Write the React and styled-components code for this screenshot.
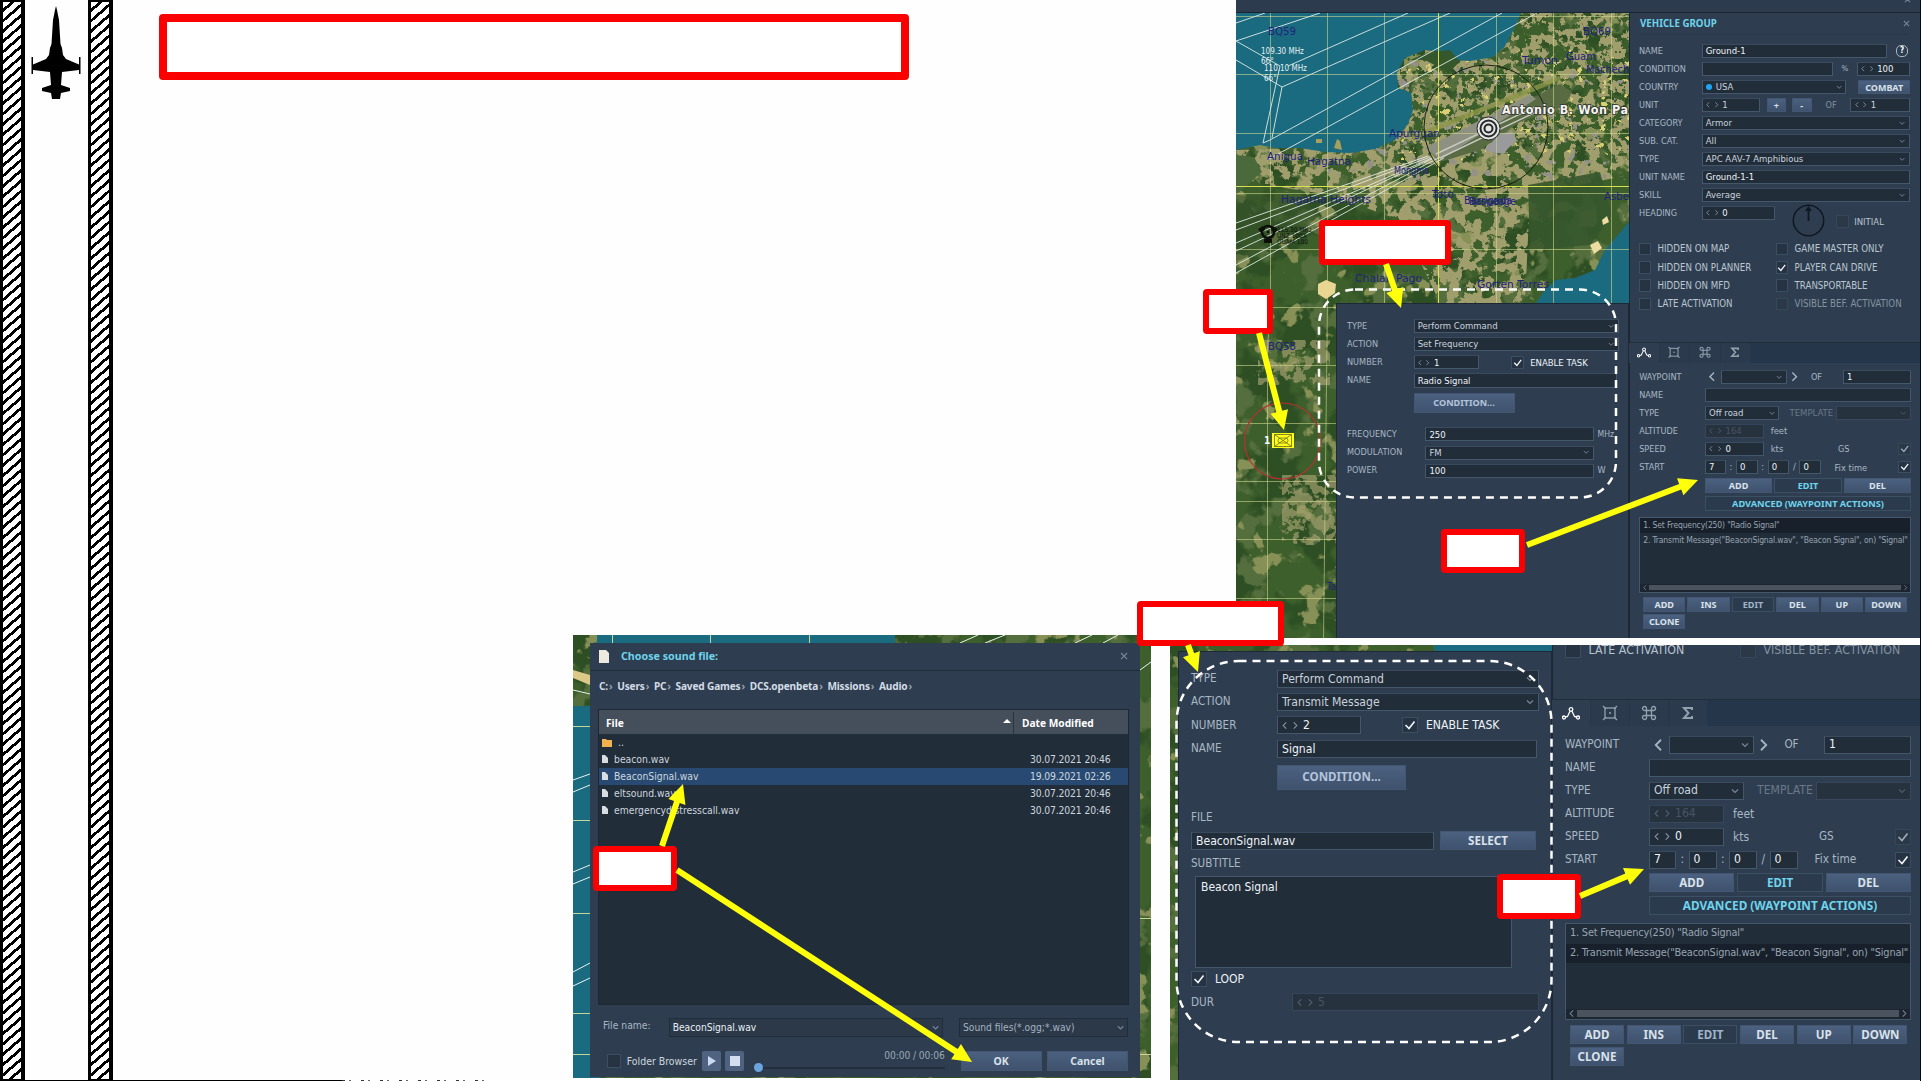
import React from "react";
import styled, { createGlobalStyle, css } from "styled-components";

const u = (n) => `calc(var(--u) * ${n})`;

const Global = createGlobalStyle`
  * { box-sizing: border-box; }
  body { margin: 0; background: #fefefe; overflow: hidden; }
`;

const C = {
  panel: "#2e3e50",
  field: "#222d3a",
  line: "#44576b",
  label: "#a9b6c4",
  text: "#c9d3dd",
  bright: "#eef3f8",
  cyan: "#6fd3ec",
  dim: "#6a7888",
};

/* ---------- page ---------- */
const Page = styled.main`
  position: relative;
  width: 1921px;
  height: 1081px;
  overflow: hidden;
  background: #fefefe;
  border-right: 1px solid #05080c;
  font-family: "DejaVu Sans Condensed", "DejaVu Sans", "Noto Sans", sans-serif;
  font-stretch: condensed;
  display: grid;
  grid-template-columns: 573px 578px 19px 66px 684px;
  grid-template-rows: 635px 3px 7px 435px 1px;
`;
const Rails = styled.aside`
  grid-column: 1;
  grid-row: 1 / 6;
  display: flex;
  align-items: flex-start;
  width: 573px;
`;
const Hatch = styled.div`
  width: 25px;
  height: 1081px;
  border: solid #000;
  border-width: 2px 4px 2px 3px;
  background: repeating-linear-gradient(139deg, #fff 0 5px, #000 5px 7.8px);
`;
const JetSlot = styled.div`
  width: 63px;
  height: 1081px;
  padding: 6px 0 0 4px;
  border-bottom: 1px solid #000;
`;
const Baseline = styled.div`
  align-self: flex-end;
  width: 229px;
  height: 1px;
  background: #000;
`;
const Ticks = styled(Baseline)`
  width: 142px;
  background: repeating-linear-gradient(90deg, #333 0 3px, transparent 3px 7px, #666 7px 9px, transparent 9px 19px);
`;

/* ---------- shots ---------- */
const TopShot = styled.section`
  --u: 0.783px;
  grid-column: 5;
  grid-row: 1 / 3;
  display: flex;
  flex-direction: column;
  background: ${C.panel};
`;
const TopStrip = styled.div`
  height: 13px;
  padding-right: 9px;
  border-bottom: 1px solid #1b2634;
  background: #2c3c4e;
  display: flex;
  justify-content: flex-end;
  align-items: flex-start;
  overflow: hidden;
  svg { margin-top: -4px; }
`;
const ShotBody = styled.div`
  flex: 1;
  display: flex;
  min-height: 0;
`;
const MapArea = styled.div`
  position: relative;
  width: 393px;
  padding: 290px 0 0 100px;
  flex: none;
`;
const Backdrop = styled.svg`
  position: absolute;
  inset: 0;
  width: 100%;
  height: 100%;
`;
const TaskPanel = styled.div`
  position: relative;
  height: 100%;
  background: ${C.panel};
  border: 1px solid #1d2937;
  border-bottom: 0;
  padding: ${(p) => p.$pad};
  display: flex;
  flex-direction: column;
  gap: ${u(5.2)};
`;
const BottomShot = styled.section`
  --u: 1px;
  grid-column: 4 / 6;
  grid-row: 4;
  display: flex;
  position: relative;
  overflow: hidden;
`;
const BottomTask = styled.div`
  position: relative;
  width: 382px;
  padding: 6px 0 0 8px;
`;
const Side = styled.div`
  position: relative;
  flex: 1;
  background: ${C.panel};
  box-shadow: inset 1px 0 #1c2836;
  display: flex;
  flex-direction: column;
  min-width: 0;
`;
const DialogShot = styled.section`
  --u: 0.9px;
  grid-column: 2;
  grid-row: 2 / 5;
  height: 443px;
  position: relative;
  padding: 8px 11px 1px 17px;
`;
const Dialog = styled.div`
  position: relative;
  height: 434px;
  background: ${C.panel};
  display: flex;
  flex-direction: column;
`;

/* ---------- form pieces ---------- */
const Row = styled.div`
  display: flex;
  align-items: center;
  height: ${u(18)};
  flex: none;
  ${(p) => p.$mt && css`margin-top: ${u(p.$mt)};`}
  ${(p) => p.$ml && css`margin-left: ${u(p.$ml)};`}
  gap: ${(p) => u(p.$gap || 0)};
`;
const Label = styled.span`
  font-size: ${(p) => u(p.$size || 11.6)};
  line-height: 1;
  color: ${(p) => p.$color || C.label};
  width: ${(p) => (p.$w ? u(p.$w) : "auto")};
  flex: none;
  white-space: nowrap;
  text-align: ${(p) => p.$align || "left"};
`;
const FieldBox = styled.div`
  width: ${(p) => (p.$w ? u(p.$w) : "auto")};
  ${(p) => !p.$w && "flex: 1;"}
  flex-shrink: 0;
  min-width: 0;
  height: 100%;
  padding: 0 ${u(4.5)} 0 ${u(4)};
  background: ${(p) => (p.$off ? "#27323f" : C.field)};
  border: 1px solid ${(p) => (p.$off ? "#38485a" : C.line)};
  border-top-color: ${(p) => (p.$off ? "#34445a" : "#3a4b5e")};
  display: flex;
  align-items: center;
  justify-content: space-between;
  font-size: ${u(12.1)};
  line-height: 1;
  color: ${(p) => (p.$off ? "#475463" : p.$bright ? C.bright : C.text)};
  white-space: nowrap;
`;
const Spinner = styled.span`
  display: flex;
  align-items: center;
  gap: ${u(4)};
  margin-left: ${u(-1)};
`;
const Caret = styled.svg`
  width: ${(p) => u(p.$s || 8)};
  height: ${(p) => u(p.$s || 8)};
  flex: none;
  fill: none;
  stroke: ${(p) => p.$c || "#76869a"};
  stroke-width: 1.2;
`;
const Down = (p) => <Caret viewBox="0 0 8 8" {...p}><path d="M1 2.500 4 5.500 7 2.500" /></Caret>;
const Prev = (p) => <Caret viewBox="0 0 8 8" {...p}><path d="M6 .5 2.500 4 6 7.500" /></Caret>;
const Next = (p) => <Caret viewBox="0 0 8 8" {...p}><path d="M2 .5 5.500 4 2 7.500" /></Caret>;
const Cross = () => <Caret viewBox="0 0 8 8" $s={9}><path d="M1 1 7 7M7 1 1 7" /></Caret>;

function Field({ drop, spin, children, ...rest }) {
  const tone = rest.$off ? "#556373" : "#8b9aab";
  return (
    <FieldBox {...rest}>
      {spin ? (
        <Spinner><Prev $c={tone} $s={7} /><Next $c={tone} $s={7} /><span>{children}</span></Spinner>
      ) : <span>{children}</span>}
      {drop && <Down $c={rest.$off ? "#4c5a6a" : undefined} />}
    </FieldBox>
  );
}
const Btn = styled.button`
  width: ${(p) => (p.$w ? u(p.$w) : "auto")};
  ${(p) => !p.$w && "flex: 1;"}
  height: ${(p) => u(p.$h || 19)};
  flex-shrink: 0;
  padding: 0;
  border: 1px solid ${(p) => (p.$flat ? "#3c5064" : "#425672")};
  background: ${(p) => (p.$flat ? "#2b3b4d" : "linear-gradient(#4b617f, #3f526e)")};
  color: ${(p) => p.$color || "#d9e1ea"};
  font-family: "Noto Sans", "DejaVu Sans Condensed", sans-serif;
  font-weight: 700;
  font-size: ${(p) => u(p.$size || 11.6)};
  line-height: 1;
  white-space: nowrap;
`;
const Box = styled.span`
  width: ${u(16)};
  height: ${u(16)};
  flex: none;
  border: 1px solid ${(p) => (p.$bare ? "#35475a" : "#3b4e62")};
  background: ${(p) => (p.$bare ? "#2a3848" : "#263342")};
  display: grid;
  place-items: center;
`;
const Check = ({ on, dim, bare }) => (
  <Box $bare={bare}>
    {on && <Caret viewBox="0 0 12 12" $s={12} $c={dim ? "#9eabb8" : "#f2f6fa"}><path d="M1.500 6 5 9.500 10.500 2.500" strokeWidth="1.6" /></Caret>}
  </Box>
);
const CheckGrid = styled.div`
  display: grid;
  grid-template-columns: ${u(175)} 1fr;
  row-gap: ${u(5.3)};
  padding-left: ${u(12.5)};
  align-items: center;
`;
const CheckItem = styled.div`
  display: flex;
  align-items: center;
  height: ${u(18)};
  gap: ${u(8)};
`;

const flags = [
  ["HIDDEN ON MAP"], ["GAME MASTER ONLY"],
  ["HIDDEN ON PLANNER"], ["PLAYER CAN DRIVE", true],
  ["HIDDEN ON MFD"], ["TRANSPORTABLE"],
  ["LATE ACTIVATION"], ["VISIBLE BEF. ACTIVATION", false, true],
];
const Flags = ({ from = 0 }) => (
  <CheckGrid>
    {flags.slice(from).map(([t, on, off]) => (
      <CheckItem key={t}>
        <Check on={on} bare={off} />
        <Label $size={12.3} $color={off ? "#8492a1" : "#bac5d0"}>{t}</Label>
      </CheckItem>
    ))}
  </CheckGrid>
);

/* ---------- vehicle group ---------- */
const TitleBar = styled.div`
  height: 22px;
  margin: 0 10px 9px 11px;
  display: flex;
  justify-content: space-between;
  align-items: center;
  border-bottom: 1px solid #2a394a;
`;
const Heading = styled.h2`
  margin: 0;
  font: 700 ${(p) => p.$size}px "Noto Sans", sans-serif;
  line-height: 1;
  color: ${C.cyan};
`;
const Fields = styled.div`
  display: flex;
  flex-direction: column;
  gap: ${u(5)};
  padding: ${(p) => p.$pad};
`;
const Dot = styled.i`
  display: inline-block;
  width: 6px;
  height: 6px;
  margin-right: 4px;
  border-radius: 50%;
  background: #20a4f5;
`;
const Help = styled.span`
  width: 12px;
  height: 12px;
  margin-left: 9px;
  border: 1px solid #a9b6c4;
  border-radius: 5px;
  font-size: 8px;
  font-weight: 700;
  line-height: 10px;
  text-align: center;
  color: #fff;
`;
const Dial = styled.svg`
  width: 33px;
  height: 33px;
  margin: 15px 11px 0 17px;
  flex: none;
`;
const Spacer = styled.div`flex: 1;`;
const FlagsTop = styled.div`padding-top: 22px;`;

function VehicleGroup() {
  return (
    <>
      <TitleBar><Heading $size={9.7}>VEHICLE GROUP</Heading><Cross /></TitleBar>
      <Fields $pad="0 10px 0 10px">
        <Row><Label $w={80}>NAME</Label><Field $w={237} $bright>Ground-1</Field><Help>?</Help></Row>
        <Row><Label $w={80}>CONDITION</Label><Field $w={168} /><Label $w={30} $align="center" $size={10}>%</Label><Field spin $bright>100</Field></Row>
        <Row><Label $w={80}>COUNTRY</Label><Field $w={185} drop><Dot />USA</Field><Spacer /><Btn $w={66} $size={11.5}>COMBAT</Btn></Row>
        <Row>
          <Label $w={80}>UNIT</Label><Field $w={75} spin>1</Field>
          <Label $w={8} /><Btn $w={25}>+</Btn><Label $w={7} /><Btn $w={26}>-</Btn>
          <Label $w={49} $align="center" $color="#8290a0">OF</Label><Field spin>1</Field>
        </Row>
        <Row><Label $w={80}>CATEGORY</Label><Field drop>Armor</Field></Row>
        <Row><Label $w={80}>SUB. CAT.</Label><Field drop>All</Field></Row>
        <Row><Label $w={80}>TYPE</Label><Field drop>APC AAV-7 Amphibious</Field></Row>
        <Row><Label $w={80}>UNIT NAME</Label><Field $bright>Ground-1-1</Field></Row>
        <Row><Label $w={80}>SKILL</Label><Field drop>Average</Field></Row>
        <Row>
          <Label $w={80}>HEADING</Label><Field $w={94} spin $bright>0</Field>
          <Dial viewBox="0 0 33 33" fill="none" stroke="#0f1822" strokeWidth="1.5">
            <circle cx="16.5" cy="16.5" r="15.2" /><path d="M16.5 17V4M14 7l2.500-3.500L19 7" strokeWidth="1.8" />
          </Dial>
          <Row $mt={22} $gap={7}><Check bare /><Label $size={12.1} $color="#bac5d0">INITIAL</Label></Row>
        </Row>
      </Fields>
      <FlagsTop><Flags /></FlagsTop>
    </>
  );
}

/* ---------- waypoint ---------- */
const TabBar = styled.div`
  display: flex;
  height: ${u(27)};
  flex: none;
  border-top: 1px solid #202d3b;
  background: #26364a;
`;
const Tab = styled.div`
  width: ${u(39)};
  display: grid;
  place-items: center;
  background: ${(p) => (p.$on ? C.panel : "#2b3b4d")};
  border-right: 1px solid #27374a;
  svg {
    width: ${u(18)};
    height: ${u(16)};
    fill: none;
    stroke: ${(p) => (p.$on ? "#fff" : "#93a1af")};
    stroke-width: 1.3;
  }
`;
const Section = styled.div`
  display: flex;
  flex-direction: column;
  gap: ${u(5)};
  padding: ${u(9.5)} 9px 0 ${u(13)};
`;
const Sep = styled(Label)`
  width: ${u(12.5)};
  text-align: center;
`;
const List = styled.div`
  height: ${u(97)};
  margin-top: ${u(3.5)};
  border: 1px solid ${C.line};
  background: ${C.field};
  display: flex;
  flex-direction: column;
`;
const ListRow = styled.div`
  height: ${u(19.5)};
  padding-left: ${u(4)};
  display: flex;
  align-items: center;
  font-size: ${u(10.9)};
  letter-spacing: ${u(-0.2)};
  line-height: 1;
  color: #97a4b1;
  white-space: nowrap;
  background: ${(p) => (p.$on ? "#18202b" : "transparent")};
`;
const Scroll = styled.div`
  margin-top: auto;
  height: ${u(10)};
  padding: 0 ${u(2)} ${u(1)};
  display: flex;
  align-items: center;
  gap: ${u(2)};
  background: #1c2530;
`;
const Thumb = styled.div`
  flex: 1;
  height: ${u(7)};
  background: #4b545e;
`;
const Actions = styled.div`
  display: grid;
  grid-template-columns: repeat(6, ${u(54)});
  gap: ${u(3)} ${u(2.7)};
  padding-left: ${u(5)};
`;
const WaypointTop = styled.div`
  height: 296.5px;
  flex: none;
`;
const LateRow = styled.div`
  height: 54px;
  flex: none;
  overflow: hidden;
  > div { margin-top: -4px; }
`;

function Waypoint({ selected }) {
  return (
    <>
      <TabBar>
        <Tab $on><svg viewBox="0 0 18 16"><circle cx="9" cy="4.5" r="1.8" /><circle cx="2" cy="12.5" r="1.5" /><circle cx="16" cy="12.5" r="1.5" /><path d="M3.500 12 5.500 11.500 8 6.200M10 6.200 12.500 11.500 14.500 12" /></svg></Tab>
        <Tab><svg viewBox="0 0 18 16"><rect x="4" y="3" width="10" height="10" /><path d="M2 1l3 3M16 1l-3 3M2 15l3-3M16 15l-3-3M8 8h2" /></svg></Tab>
        <Tab><svg viewBox="0 0 18 16"><path d="M6.500 5.500h5v5h-5zM6.500 5.500h-2a2 2 0 1 1 2-2zM11.500 5.500v-2a2 2 0 1 1 2 2zM6.500 10.500v2a2 2 0 1 1-2-2zM11.500 10.500h2a2 2 0 1 1-2 2z" /></svg></Tab>
        <Tab><svg viewBox="0 0 18 16"><path d="M13 5V3H5l4.500 5L5 13h8v-2" strokeWidth="2" /></svg></Tab>
      </TabBar>
      <Section>
        <Row>
          <Label $w={87}>WAYPOINT</Label><Prev $s={12} $c="#a7b4c2" /><Label $w={5} />
          <Field $w={85} drop /><Label $w={4} /><Next $s={12} $c="#a7b4c2" />
          <Label $w={43} $align="center">OF</Label><Spacer /><Field $w={87} $bright>1</Field>
        </Row>
        <Row><Label $w={84}>NAME</Label><Field /></Row>
        <Row><Label $w={84}>TYPE</Label><Field $w={95} drop>Off road</Field><Label $w={13} /><Label $w={59} $size={12.1} $color={C.dim}>TEMPLATE</Label><Field drop $off /></Row>
        <Row><Label $w={84}>ALTITUDE</Label><Field $w={75} spin $off>164</Field><Label $w={9} /><Label $size={12}>feet</Label></Row>
        <Row><Label $w={84}>SPEED</Label><Field $w={75} spin $bright>0</Field><Label $w={9} /><Label $w={86} $size={12}>kts</Label><Label>GS</Label><Spacer /><Check on dim bare /></Row>
        <Row>
          <Label $w={84}>START</Label><Field $w={27} $bright>7</Field><Sep>:</Sep><Field $w={28} $bright>0</Field><Sep>:</Sep>
          <Field $w={28} $bright>0</Field><Sep>/</Sep><Field $w={28} $bright>0</Field><Label $w={17} /><Label $size={11.8}>Fix time</Label><Spacer /><Check on />
        </Row>
        <Row $ml={84} $gap={3}><Btn>ADD</Btn><Btn $flat $color={C.cyan}>EDIT</Btn><Btn>DEL</Btn></Row>
        <Row $ml={84}><Btn $flat $color={C.cyan} $size={11.8}>ADVANCED (WAYPOINT ACTIONS)</Btn></Row>
        <List>
          <ListRow $on={selected === 1}>1. Set Frequency(250) "Radio Signal"</ListRow>
          <ListRow $on={selected === 2}>2. Transmit Message("BeaconSignal.wav", "Beacon Signal", on) "Signal"</ListRow>
          <Scroll><Prev $s={7} /><Thumb /><Next $s={7} /></Scroll>
        </List>
        <Actions>
          <Btn>ADD</Btn><Btn>INS</Btn><Btn $flat $color="#9fb3c9">EDIT</Btn><Btn>DEL</Btn><Btn>UP</Btn><Btn>DOWN</Btn><Btn>CLONE</Btn>
        </Actions>
      </Section>
    </>
  );
}

/* ---------- tasks ---------- */
function TaskHead({ action, number, name, first }) {
  return (
    <>
      <Row><Label $w={first}>TYPE</Label><Field $w={262} drop>Perform Command</Field></Row>
      <Row><Label $w={first}>ACTION</Label><Field $w={262} drop>{action}</Field></Row>
      <Row><Label $w={first}>NUMBER</Label><Field $w={84} spin $bright>{number}</Field><Label $w={41} /><Check on /><Label $w={8} /><Label $size={12.1} $color={C.bright}>ENABLE TASK</Label></Row>
      <Row><Label $w={first}>NAME</Label><Field $w={260} $bright>{name}</Field></Row>
      <Row $ml={first} $mt={5.5}><Btn $w={129} $h={25} $color="#b4c4dc">CONDITION...</Btn></Row>
    </>
  );
}
const TextArea = styled.div`
  width: 317px;
  height: 92px;
  flex: none;
  margin: -2px 0 0 4px;
  padding: 4px 5px;
  background: ${C.field};
  border: 1px solid ${C.line};
  font-size: 12px;
  line-height: 1;
  color: ${C.bright};
`;

/* ---------- file dialog ---------- */
const DTitle = styled.div`
  height: 28px;
  padding: 0 12px 0 9px;
  display: flex;
  align-items: center;
  gap: 12px;
  border-bottom: 1px solid #1f2c3a;
`;
const Crumbs = styled.nav`
  height: 38px;
  padding: 8px 0 0 9px;
  display: flex;
  align-items: flex-start;
  gap: 4.6px;
  font: 700 10.1px "Noto Sans", sans-serif;
  letter-spacing: -0.15px;
  color: #d3dce6;
  span::after { content: "›"; color: #8ea0b2; margin-left: 1px; }
`;
const Table = styled.div`
  height: 296px;
  width: 531px;
  margin-left: 8px;
  background: ${C.field};
  border: 1px solid #1d2834;
`;
const THead = styled.div`
  height: 24px;
  display: flex;
  align-items: center;
  background: #444f5b;
  font: 700 10.2px "Noto Sans", sans-serif;
  color: #fff;
  padding: 2px 0 0 7px;
`;
const Sort = styled.i`
  margin-left: auto;
  margin-right: 2px;
  margin-top: -5px;
  border: solid transparent;
  border-width: 0 4px 4px;
  border-bottom-color: #fff;
`;
const DateHead = styled.span`
  width: 115px;
  height: 23px;
  line-height: 23px;
  padding-left: 8px;
  border-left: 1px solid #2a343f;
`;
const TRow = styled.div`
  height: 17px;
  display: flex;
  align-items: center;
  justify-content: space-between;
  padding: 0 17px 0 3px;
  font-size: 10.3px;
  line-height: 1;
  color: #cdd6df;
  background: ${(p) => (p.$on ? "#284a72" : "transparent")};
`;
const DateCell = styled.span`
  width: 81px;
  letter-spacing: -0.14px;
  white-space: nowrap;
`;
const Name = styled.span`
  display: flex;
  align-items: center;
  gap: 6px;
`;
const DRow = styled.div`
  display: flex;
  align-items: ${(p) => p.$align || "center"};
  height: 20px;
  padding: 0 12px 0 ${(p) => p.$pl}px;
  margin-top: ${(p) => p.$mt}px;
`;
const DField = styled.div`
  width: ${(p) => p.$w}px;
  height: 19px;
  padding: 0 3px;
  border: 1px solid #202d3a;
  background: #2b3949;
  display: flex;
  align-items: center;
  justify-content: space-between;
  font-size: 10.2px;
  color: ${(p) => p.$color};
`;
const FileLabel = styled(Label)`padding-top: 2px;`;
const IconBtn = styled.span`
  width: 19px;
  height: 20px;
  background: #4f6381;
  border-radius: 2px;
  margin-right: 4px;
  display: grid;
  place-items: center;
`;
const Track = styled.div`
  width: 191px;
  height: 20px;
  display: flex;
  flex-direction: column;
  align-items: flex-end;
  font-size: 10.2px;
  letter-spacing: -0.1px;
  line-height: 10px;
  color: #9aa8b6;
`;
const TrackLine = styled.div`
  width: 100%;
  height: 9px;
  margin-top: 2px;
  display: flex;
  align-items: center;
  &::before { content: ""; width: 9px; height: 9px; border-radius: 50%; background: #6ca4e0; }
  &::after { content: ""; flex: 1; height: 2px; background: #222e3c; }
`;
const files = [
  ["beacon.wav", "30.07.2021 20:46"],
  ["BeaconSignal.wav", "19.09.2021 02:26"],
  ["eltsound.wav", "30.07.2021 20:46"],
  ["emergencydistresscall.wav", "30.07.2021 20:46"],
];

/* ---------- terrain ---------- */
const speck = (id, seed, freq, color, gain, cut) => (
  <filter id={id} x="0" y="0" width="100%" height="100%" colorInterpolationFilters="sRGB">
    <feTurbulence type="fractalNoise" baseFrequency={freq} numOctaves="4" seed={seed} result="n" />
    <feColorMatrix in="n" type="matrix" values={`0 0 0 0 ${color[0]} 0 0 0 0 ${color[1]} 0 0 0 0 ${color[2]} ${gain} 0 0 0 ${cut}`} result="m" />
    <feComposite in="m" in2="SourceGraphic" operator="in" />
  </filter>
);
const TerrainDefs = () => (
  <defs>
    {speck("dark", 4, 0.02, [0.18, 0.31, 0.14], 12, -6)}
    {speck("olive", 9, 0.03, [0.33, 0.43, 0.24], 14, -7.9)}
    {speck("tan", 12, 0.085, [0.63, 0.62, 0.43], 20, -9.4)}
    {speck("tanSparse", 21, 0.04, [0.53, 0.57, 0.34], 16, -10.1)}
    {speck("woods", 33, 0.13, [0.23, 0.36, 0.17], 22, -12.6)}
    {speck("yellow", 40, 0.12, [0.85, 0.81, 0.45], 26, -18.2)}
    {speck("grey", 51, 0.09, [0.58, 0.57, 0.53], 22, -14.6)}
  </defs>
);
const Land = ({ x, y, w, h }) => (
  <>
    <rect x={x} y={y} width={w} height={h} fill="#3d5f2c" />
    {["dark", "olive", "tanSparse"].map((f) => (
      <rect key={f} x={x} y={y} width={w} height={h} filter={`url(#${f})`} />
    ))}
  </>
);
const towns = [
  ["BQ59", 1268, 35, 28], ["BQ69", 1583, 35, 28], ["Tumon", 1522, 64, 36], ["Guam", 1566, 60, 30], ["Machech", 1586, 73, 43],
  ["Apurguan", 1389, 137, 51], ["Anigua", 1267, 160, 36], ["Hagatna", 1307, 165, 44], ["Mongmo", 1394, 174, 35], ["Toto", 1432, 198, 22],
  ["Barrigada", 1464, 204, 48], ["Baspeage", 1469, 205, 47], ["Asbe", 1604, 200, 25], ["Hagatna Heights", 1281, 203, 90],
  ["Chalan Pago", 1355, 282, 67], ["Gorten Torres", 1477, 288, 72], ["BQ58", 1268, 350, 28], ["Ta", 1327, 590, 9],
];

function IslandMap() {
  return (
    <Backdrop viewBox="1236 13 393 625" preserveAspectRatio="none">
      <TerrainDefs />
      <Land x={1236} y={13} w={393} h={625} />
      <path d="M1236 150 1300 148 1375 149 1397 72 1425 50 1493 57 1521 13H1629V175L1530 195 1525 303H1440L1400 220 1330 195 1236 180Z" filter="url(#tan)" />
      <path d="M1380 60H1629V180H1300L1400 140Z" filter="url(#grey)" />
      <path d="M1400 13H1629V150H1400Z" filter="url(#woods)" />
      <path d="M1400 50H1629V160H1400Z" filter="url(#yellow)" />
      <path d="M1258 340h72v45h-72zM1282 475h54v70h-54z" filter="url(#tan)" opacity=".7" />
      <path d="M1528 185 1600 172 1612 215 1590 245 1530 250Z" fill="#36572c" opacity=".9" />
      <path d="M1236 155 1254 157 1262 172 1236 195Z" fill="#4b6a3c" />
      <path d="M1236 195 1300 198 1320 215 1300 232 1236 262Z" fill="#37552b" opacity=".6" />
      <path d="M1428 150 1560 84 1572 92 1565 106 1520 122 1480 150 1440 162Z" fill="#596b43" />
      <path d="M1425 148 1530 95 1536 99 1440 160Z" fill="#8e9181" />
      <path d="M1484 150 1500 134 1512 131 1516 140 1503 154Z" fill="#9a9a9c" />
      <path d="M1436 154 1535 107M1440 158 1538 111" stroke="#c9c9c2" strokeWidth="1.4" />
      <path d="M1412 138 1560 78" stroke="#8c9648" strokeWidth="5" opacity=".8" />
      <path d="M1236 13H1521L1515 27 1505 46 1493 57 1470 61 1455 60 1447 52 1425 50 1405 58 1397 72 1398 88 1411 93 1413 110 1408 124 1395 140 1375 149 1350 153 1325 152 1300 148 1275 148 1260 145 1236 150Z" fill="#1a6b80" />
      <path d="M1629 222 1605 250 1595 270 1575 278 1555 280 1545 290 1536 303H1629Z" fill="#1a6b80" />
      <path d="M1427 53 1450 50 1460 62 1448 72 1425 60 1410 60Z" fill="#35572c" />
      <path d="M1316 139h6v4h-6zM1334 148l3-9 3 2 2 9z" fill="#a79f5c" />
      <path d="M1270.500 13V300L1267.500 350V638M1327.500 13V300L1323.500 638M1384.500 13V303M1496.500 13V303M1553.500 13V303M1611.500 13V303M1236 16.500H1629M1236 74.500H1629M1236 133.500H1629M1236 193.500H1629M1236 249.500H1629M1236 307.500H1337M1236 365.500H1337M1236 423.500H1337M1236 481.500H1337M1236 501.500H1337M1236 539.500H1337M1236 598.500H1337" fill="none" stroke="#cdd58c" strokeWidth="1" opacity=".6" />
      <path d="M1438.500 13V303M1236 186.500H1629" stroke="#dbe04e" strokeWidth="1" />
      <g stroke="#dfe9e4" strokeWidth=".9" fill="none">
        <path d="M1236 23 1265 13M1236 41 1320 13M1288 66 1408 13M1282 87 1450 13M1270 140 1502 13M1267 160 1537 13M1236 60 1282 87 1272 138M1236 41 1280 66 1263 143 1270 140" />
        <path d="M1428 156 1236 223M1430 157 1236 230M1432 158 1236 243M1434 158 1236 251M1440 157 1236 265M1444 158 1236 273" />
      </g>
      <circle cx="1486" cy="127" r="62" fill="none" stroke="#16200f" />
      <g fill="none" stroke="#23262a">
        <circle cx="1488.5" cy="128.5" r="11.5" fill="#e4e4e0" /><circle cx="1488.5" cy="128.5" r="8" strokeWidth="2" /><circle cx="1488.5" cy="128.5" r="4" strokeWidth="2" />
      </g>
      <g fontSize="10.8" fill="#22227c">
        {towns.map(([t, x, y, w]) => <text key={t} x={x} y={y} textLength={w} lengthAdjust="spacingAndGlyphs">{t}</text>)}
      </g>
      <g fontSize="8" fill="#e6eef0">
        <text x="1261" y="54">109.30 MHz</text><text x="1261" y="64">66°</text>
        <text x="1264" y="71">110.10 MHz</text><text x="1264" y="81">66°</text>
      </g>
      <text x="1502" y="114" fontSize="12.5" fontWeight="700" fill="#f6f6f0" stroke="#333" strokeWidth="1.5" paintOrder="stroke" textLength="126">Antonio B. Won Pa</text>
      <circle cx="1268" cy="232" r="6" fill="none" stroke="#0b0f08" strokeWidth="2.5" />
      <path d="M1258 229l5-3 2 4-4 3zM1278 229l-5-3-2 4 4 3zM1264 239h8v4h-8zM1267 231h2v2h-2z" fill="#0b0f08" />
      <g fontSize="6.5" fill="#0b0f08"><text x="1277" y="232">115.30 MHz</text><text x="1277" y="238">UNZ 100X</text><text x="1277" y="244">GUAM 100</text></g>
      <path d="M1318 284 1326 280 1336 284 1335 293 1326 299 1318 294Z" fill="#ead693" />
      <path d="M1590 245 1598 241 1602 248 1594 254ZM1602 220l5-4 2 6-6 3z" fill="#eddda0" />
      <circle cx="1282.5" cy="441" r="38" fill="none" stroke="#b93030" strokeWidth="1.2" />
      <rect x="1272" y="433" width="22" height="15" fill="#ffff1e" />
      <g fill="none" stroke="#6b6a12"><path d="M1274.500 434.500h17v12h-17zM1274.500 434.500 1291.500 446.500M1291.500 434.500 1274.500 446.500" strokeWidth=".8" /><rect x="1278" y="438" width="10" height="5" rx="2.5" strokeWidth=".8" /></g>
      <text x="1264" y="444" fontSize="10" fontWeight="700" fill="#fff">1</text>
    </Backdrop>
  );
}

/* ---------- annotations ---------- */
const Callout = styled.div`
  position: absolute;
  left: ${(p) => p.$x}px;
  top: ${(p) => p.$y}px;
  width: ${(p) => p.$w}px;
  height: ${(p) => p.$h}px;
  border: ${(p) => p.$b || 6}px solid #fb0000;
  border-radius: 4px;
  background: #fff;
`;
const Overlay = styled.svg`
  position: absolute;
  inset: 0;
  pointer-events: none;
`;
const callouts = [
  [159, 14, 750, 66, 8], [1319, 220, 132, 45], [1203, 289, 70, 45], [1441, 529, 84, 44],
  [1137, 601, 147, 45], [593, 846, 84, 45], [1497, 874, 84, 45],
];
const arrows = [
  [1386, 264, 1401, 308], [1259, 333, 1284, 430], [1527, 545, 1698, 480],
  [1188, 645, 1198, 672], [662, 846, 683, 784], [677, 870, 972, 1062], [1580, 896, 1644, 869],
];
function Arrow({ from: [x1, y1, x2, y2] }) {
  const len = Math.hypot(x2 - x1, y2 - y1);
  const deg = (Math.atan2(y2 - y1, x2 - x1) * 180) / Math.PI;
  return (
    <path
      fill="#ffff0c"
      transform={`translate(${x1} ${y1}) rotate(${deg})`}
      d={`M0-3H${len - 19}V-9L${len} 0 ${len - 19} 9V3H0Z`}
    />
  );
}

export default function App() {
  return (
    <Page>
      <Global />
      <Rails>
        <Hatch />
        <JetSlot>
          <svg width="54" height="94" viewBox="0 0 54 94">
            <path d="M27 0 28 4 30 14 31.500 38 33 42 34 49 37 53 50 58.500V51h1.500v17H50v-4L33 66 32 79 41 82v3l-9 2-1 6h-8l-1-6-9-2v-3l9-3-1-13-17-2v4H2.500V51H4v7.500L17 53l3-4 1-7 1.500-4L24 14 26 4Z" fill="#000" />
          </svg>
        </JetSlot>
        <Hatch />
        <Baseline />
        <Ticks />
      </Rails>

      <TopShot>
        <TopStrip><Cross /></TopStrip>
        <ShotBody>
          <MapArea>
            <IslandMap />
            <TaskPanel $pad="15px 0 0 10px">
              <TaskHead first={85} action="Set Frequency" number="1" name="Radio Signal" />
              <Row $mt={17}><Label $w={100}>FREQUENCY</Label><Field $w={215} $bright>250</Field><Label $w={5} /><Label $size={11}>MHz</Label></Row>
              <Row><Label $w={100}>MODULATION</Label><Field $w={215} drop>FM</Field></Row>
              <Row><Label $w={100}>POWER</Label><Field $w={215} $bright>100</Field><Label $w={5} /><Label>W</Label></Row>
            </TaskPanel>
          </MapArea>
          <Side>
            <VehicleGroup />
            <Spacer />
            <WaypointTop><Waypoint selected={1} /></WaypointTop>
          </Side>
        </ShotBody>
      </TopShot>

      <DialogShot>
        <Backdrop viewBox="573 635 578 443" preserveAspectRatio="none">
          <Land x={573} y={635} w={578} h={443} />
          <path d="M597 635H895V660H597ZM573 706H600V1078H573Z" fill="#1a6b80" />
          <path d="M573 670 590 675V685L573 678Z" fill="#dcc987" />
          <path d="M612.500 635v8M710.500 635v8M809.500 635v8M573 726.500h17M573 820.500h17M573 913.500h17M573 1013.500h17M573 1054.500h17M1140 918.500h11M1140 1054.500h11" stroke="#c7d59a" />
          <path d="M573 780 590 774M573 792 590 785M573 872 590 865M573 884 590 877M573 972 590 963M573 986 590 978M573 690 590 694M960 643 978 635M985 643 1005 635M1075 643 1092 635M1103 643 1118 635M1140 670l11-8" stroke="#e8f2ee" />
        </Backdrop>
        <Dialog>
          <DTitle>
            <svg width="10" height="13" viewBox="0 0 10 13"><path d="M0 0h7l3 3v10H0z" fill="#eceade" /></svg>
            <Heading $size={10.7}>Choose sound file:</Heading>
            <Spacer /><Cross />
          </DTitle>
          <Crumbs>{["C:", "Users", "PC", "Saved Games", "DCS.openbeta", "Missions", "Audio"].map((t) => <span key={t}>{t}</span>)}</Crumbs>
          <Table>
            <THead>File<Sort /><DateHead>Date Modified</DateHead></THead>
            <TRow><Name><svg width="10" height="9" viewBox="0 0 10 9"><path d="M0 1h4l1 1h5v7H0z" fill="#f0b350" /></svg>..</Name></TRow>
            {files.map(([n, d], i) => (
              <TRow key={n} $on={i === 1}>
                <Name><svg width="6" height="8" viewBox="0 0 6 8"><path d="M0 0h3l3 3v5H0z" fill="#d7dde3" /></svg>{n}</Name><DateCell>{d}</DateCell>
              </TRow>
            ))}
          </Table>
          <DRow $pl={13} $mt={13} $align="flex-start">
            <FileLabel $w={73} $size={11.4}>File name:</FileLabel>
            <DField $w={274} $color="#e9eff5">BeaconSignal.wav<Down /></DField>
            <Spacer />
            <DField $w={169} $color="#a5b2c0">Sound files(*.ogg;*.wav)<Down /></DField>
          </DRow>
          <DRow $pl={17} $mt={13}>
            <Check /><Label $w={6} /><Label $w={84} $size={11.6} $color="#cdd6df">Folder Browser</Label>
            <IconBtn><svg width="8" height="10"><path d="M0 0 8 5 0 10z" fill="#c9daf0" /></svg></IconBtn>
            <IconBtn><svg width="10" height="10"><path d="M0 0h10v10H0z" fill="#d3def0" /></svg></IconBtn>
            <Label $w={6} />
            <Track>00:00 / 00:06<TrackLine /></Track>
            <Spacer />
            <Btn $w={90} $h={22}>OK</Btn><Label $w={6} /><Btn $w={90} $h={22}>Cancel</Btn>
          </DRow>
        </Dialog>
      </DialogShot>

      <BottomShot>
        <Backdrop viewBox="1170 645 750 435" preserveAspectRatio="none">
          <Land x={1170} y={645} w={400} h={435} />
          <path d="M1434 645H1552V652H1434Z" fill="#1a6b80" />
        </Backdrop>
        <BottomTask>
          <TaskPanel $pad="18px 0 0 12px">
            <TaskHead first={86} action="Transmit Message" number="2" name="Signal" />
            <Row $mt={17}><Label>FILE</Label></Row>
            <Row><Field $w={243} $bright>BeaconSignal.wav</Field><Label $w={6} /><Btn $w={96}>SELECT</Btn></Row>
            <Row><Label>SUBTITLE</Label></Row>
            <TextArea>Beacon Signal</TextArea>
            <Row $gap={8} $mt={-3}><Check on /><Label $size={12} $color={C.bright}>LOOP</Label></Row>
            <Row><Label $w={101}>DUR</Label><Field $w={247} spin $off>5</Field></Row>
          </TaskPanel>
        </BottomTask>
        <Side>
          <LateRow><Flags from={6} /></LateRow>
          <Waypoint selected={2} />
        </Side>
      </BottomShot>

      <Overlay width="1920" height="1081">
        <g fill="none" stroke="#fff" strokeWidth="2.5" strokeDasharray="8 6">
          <rect x="1319" y="289.5" width="297" height="208" rx="36" />
          <rect x="1176.5" y="661" width="375" height="381" rx="62" />
        </g>
      </Overlay>
      {callouts.map(([x, y, w, h, b]) => <Callout key={`${x}-${y}`} $x={x} $y={y} $w={w} $h={h} $b={b} />)}
      <Overlay width="1920" height="1081">{arrows.map((a) => <Arrow key={a.join()} from={a} />)}</Overlay>
    </Page>
  );
}
